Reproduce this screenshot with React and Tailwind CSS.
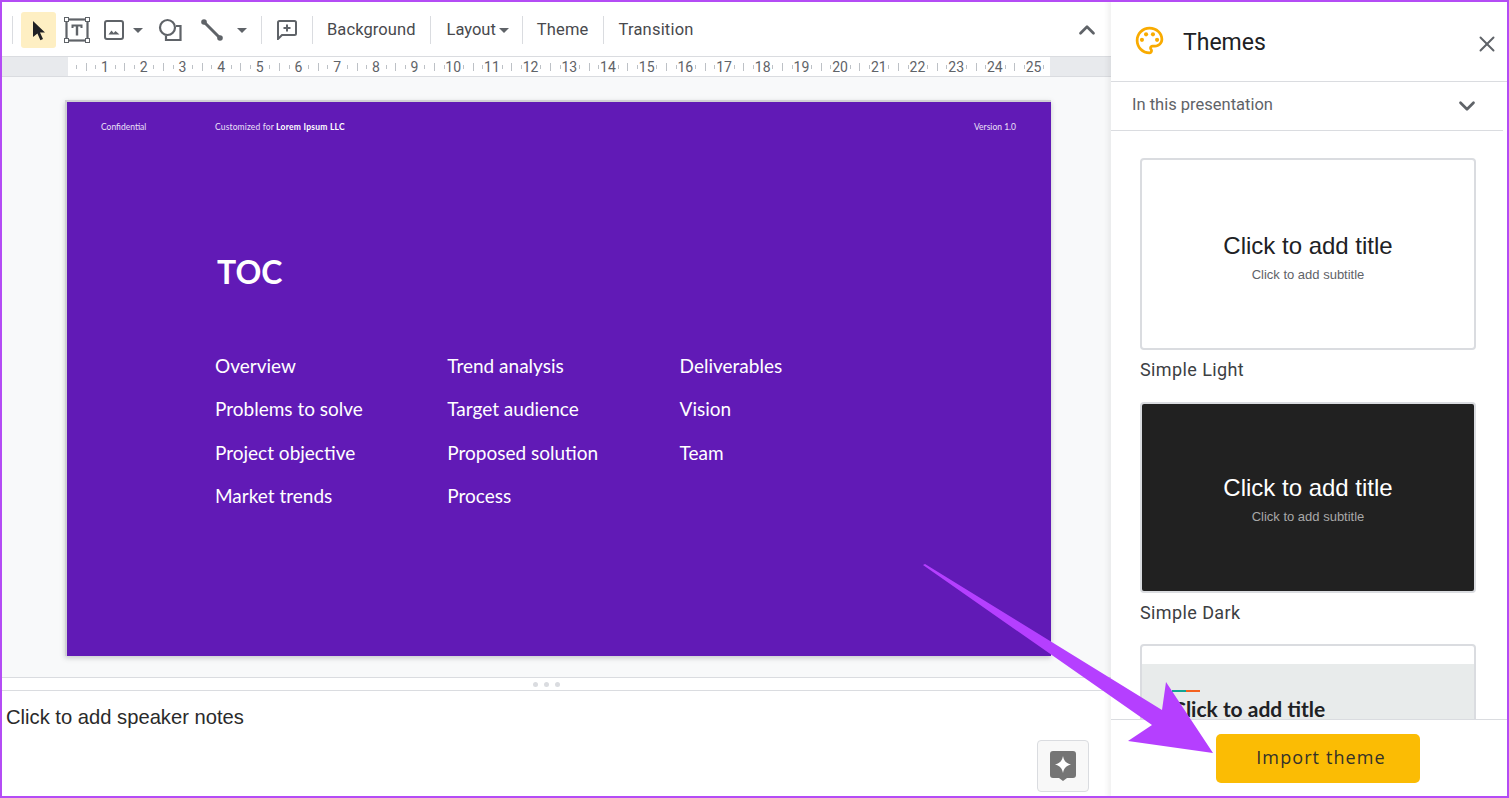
import { ChevronDown, ChevronUp, X } from "lucide-react";

const TOC_COLUMNS = [
  ["Overview", "Problems to solve", "Project objective", "Market trends"],
  ["Trend analysis", "Target audience", "Proposed solution", "Process"],
  ["Deliverables", "Vision", "Team"],
];

const RULER_NUMBERS = Array.from({ length: 25 }, (_, i) => i + 1);

function Caret({ className = "" }) {
  return (
    <svg width="10" height="5" viewBox="0 0 10 5" className={className}>
      <path d="M0 0h10L5 5z" fill="#5f6368" />
    </svg>
  );
}

function Divider({ className = "" }) {
  return <div className={`h-7 w-px bg-[#dadce0] shrink-0 ${className}`} />;
}

function Toolbar() {
  return (
    <div className="h-[57px] shrink-0 flex items-center pt-[4px] border-b border-[#dadce0] bg-white text-[16.5px] text-[#48494d] font-['Roboto',sans-serif]">
      <Divider className="ml-3" />
      {/* Select */}
      <div className="ml-2 w-[35px] h-9 rounded-[3px] bg-[#feefc3] flex items-center justify-center shrink-0">
        <svg width="16" height="21" viewBox="0 0 16 21">
          <path d="M2 1l12 11.500H9l3 6.500-2.600 1.200-3-6.600L2 17z" fill="#202124" />
        </svg>
      </div>
      {/* Text box */}
      <svg width="26" height="26" viewBox="0 0 26 26" className="ml-2 shrink-0">
        <rect x="2.500" y="2.500" width="21" height="21" fill="none" stroke="#5f6368" strokeWidth="2.200" />
        <path d="M7.500 7.500h11v3.500h-2V9.500h-2.300V18.500h-2.400V9.500H9.500V11h-2z" fill="#5f6368" />
        {[[2.500, 2.500], [23.500, 2.500], [2.500, 23.500], [23.500, 23.500]].map(([cx, cy]) => (
          <rect key={`${cx}-${cy}`} x={cx - 2} y={cy - 2} width="4" height="4" fill="#fff" stroke="#5f6368" strokeWidth="1" />
        ))}
      </svg>
      {/* Image */}
      <svg width="20" height="20" viewBox="0 0 20 20" className="ml-[14px] shrink-0">
        <rect x="1" y="1" width="18" height="18" rx="2" fill="none" stroke="#5f6368" strokeWidth="2" />
        <path d="M4.500 14.500l3-4 2.200 2.600 1.800-2.100 4 3.500z" fill="#5f6368" />
      </svg>
      <Caret className="ml-[9px] shrink-0" />
      {/* Shape */}
      <svg width="24" height="24" viewBox="0 0 24 24" className="ml-[15px] shrink-0">
        <circle cx="9.500" cy="9.500" r="7.500" fill="none" stroke="#5f6368" strokeWidth="2.200" />
        <path d="M18 8h4.500v14H8v-4.500" fill="none" stroke="#5f6368" strokeWidth="2.200" />
      </svg>
      {/* Line */}
      <svg width="22" height="22" viewBox="0 0 22 22" className="ml-[19px] shrink-0">
        <path d="M3 3l16 16" stroke="#5f6368" strokeWidth="3" />
        <circle cx="3" cy="3" r="2.800" fill="#5f6368" />
        <circle cx="19" cy="19" r="2.800" fill="#5f6368" />
      </svg>
      <Caret className="ml-[14px] shrink-0" />
      <Divider className="ml-[14px]" />
      {/* Comment */}
      <svg width="20" height="20" viewBox="0 0 20 20" className="ml-[15px] shrink-0">
        <path d="M1 2.500A1.500 1.500 0 0 1 2.500 1h15A1.500 1.500 0 0 1 19 2.500v11a1.500 1.500 0 0 1-1.500 1.500H5l-4 4z" fill="none" stroke="#5f6368" strokeWidth="2" />
        <path d="M9 4.500h2V7h2.500v2H11v2.500H9V9H6.500V7H9z" fill="#5f6368" />
      </svg>
      <Divider className="ml-[15px]" />
      <span className="ml-[14px] tracking-[0.08px]">Background</span>
      <Divider className="ml-[14px]" />
      <span className="ml-4">Layout</span>
      <Caret className="ml-[3px] shrink-0" />
      <Divider className="ml-[13px]" />
      <span className="ml-[14px] tracking-[0.15px]">Theme</span>
      <Divider className="ml-[14px]" />
      <span className="ml-[15px] tracking-[0.2px]">Transition</span>
      <ChevronUp size={26} strokeWidth={2.500} className="ml-auto mr-[11px] text-[#5f6368]" />
    </div>
  );
}

function Ruler() {
  return (
    <div className="h-5 shrink-0 flex pl-[68px] pr-[61px] bg-[#e8eaed] border-b border-[#dadce0]">
      <div className="flex-1 bg-white flex items-center pl-[8px] overflow-hidden text-[14px] text-[#5f6368] font-['Roboto',sans-serif]">
        <div className="w-[9.700px] shrink-0"><div className="h-1 w-px bg-[#bdc1c6]" /></div>
        {RULER_NUMBERS.map((n) => (
          <div key={n} className="w-[38.700px] shrink-0 flex items-center">
            <div className="w-[9.675px]"><div className="h-2 w-px bg-[#bdc1c6]" /></div>
            <div className="w-[9.675px]"><div className="h-1 w-px bg-[#bdc1c6]" /></div>
            <div className="w-[9.675px] flex">
              <span className="w-0 flex justify-center leading-none">{n}</span>
            </div>
            <div className="w-[9.675px]"><div className="h-1 w-px bg-[#bdc1c6]" /></div>
          </div>
        ))}
      </div>
    </div>
  );
}

function Slide() {
  return (
    <div className="ml-[63px] w-[986px] h-[556px] bg-[#611ab6] border-2 border-[#d0d0d4] border-r-0 border-b-0 shadow-[0_2px_5px_rgba(60,64,67,0.25)] text-white font-['Lato',sans-serif] flex flex-col">
      <div className="flex items-center text-[8.500px] pt-[20px] pl-[34px] pr-[35px] leading-[10px]">
        <span className="w-[114px] text-[#ece0f8]">Confidential</span>
        <span className="text-[#ece0f8] tracking-[0.15px]">Customized for <b className="text-white tracking-[0.25px]">Lorem Ipsum LLC</b></span>
        <span className="ml-auto text-[#ece0f8]">Version 1.0</span>
      </div>
      <h1 className="ml-[150px] mt-[120px] text-[32px] font-bold leading-10">TOC</h1>
      <div className="ml-[148px] mt-[61px] flex text-[19px] leading-[26px]">
        {TOC_COLUMNS.map((col) => (
          <div key={col[0]} className="w-[232.300px] flex flex-col gap-[17.400px]">
            {col.map((item) => (
              <span key={item}>{item}</span>
            ))}
          </div>
        ))}
      </div>
    </div>
  );
}

function MainColumn() {
  return (
    <div className="w-[1111px] shrink-0 flex flex-col">
      <Toolbar />
      <Ruler />
      <div className="h-[601px] shrink-0 bg-[#f8f9fa] pt-[23px] pl-[2px] border-b border-[#dadce0]">
        <Slide />
      </div>
      <div className="h-[13px] shrink-0 flex items-center gap-[6px] pl-[533px] border-b border-[#dadce0]">
        {[0, 1, 2].map((i) => (
          <div key={i} className="size-[5px] rounded-full bg-[#dadce0]" />
        ))}
      </div>
      <div className="flex-1 flex flex-col bg-white">
        <p className="pl-[6px] pt-[13px] text-[20.200px] leading-[26px] text-[#2a2a2a] font-['Liberation_Sans',sans-serif]">
          Click to add speaker notes
        </p>
        <div className="mt-auto mb-[6px] ml-auto mr-[22px] w-[52px] h-[52px] rounded border border-[#dadce0] bg-[#f8f8f8] flex items-center justify-center">
          <svg width="26" height="30" viewBox="0 0 26 30">
            <path d="M3 0h20a3 3 0 0 1 3 3v21a3 3 0 0 1-3 3h-6l-4 3-4-3H3a3 3 0 0 1-3-3V3a3 3 0 0 1 3-3z" fill="#757575" />
            <path d="M13 5c1 5 3 7 8 8.500-5 1.500-7 3.500-8 8.500-1-5-3-7-8-8.500 5-1.500 7-3.500 8-8.500z" fill="#fff" />
          </svg>
        </div>
      </div>
    </div>
  );
}

function ThemeCard({ dark = false, label }) {
  return (
    <div className="shrink-0">
      <div
        className={`w-[336px] rounded-[4px] border-2 border-[#dadce0] flex flex-col items-center font-['Liberation_Sans',sans-serif] ${
          dark ? "h-[191px] pt-[68px] bg-[#212121] text-white" : "h-[192px] pt-[70px] bg-white text-[#202124]"
        }`}
      >
        <div className="text-[24px] leading-8">Click to add title</div>
        <div className={`text-[13px] mt-[5px] leading-4 ${dark ? "text-[#a8a8a8]" : "text-[#5f6368]"}`}>
          Click to add subtitle
        </div>
      </div>
      <div className="mt-2 text-[18px] tracking-[0.4px] leading-6 text-[#3c4043] font-['Roboto',sans-serif]">{label}</div>
    </div>
  );
}

function ThemesPanel() {
  return (
    <div className="flex-1 min-w-0 flex flex-col bg-white shadow-[-3px_0_5px_rgba(60,64,67,0.08)] font-['Roboto',sans-serif]">
      <div className="h-[82px] shrink-0 flex items-center border-b border-[#dadce0]">
        <svg width="33" height="33" viewBox="0 0 24 24" className="ml-[22px]" fill="#f9ab00">
          <path d="M12 22C6.490 22 2 17.510 2 12S6.490 2 12 2s10 4.040 10 9c0 3.310-2.690 6-6 6h-1.770c-.280 0-.500.220-.500.500 0 .120.050.230.130.330.410.470.640 1.060.640 1.670 0 1.380-1.120 2.500-2.500 2.500zm0-18c-4.410 0-8 3.590-8 8s3.590 8 8 8c.280 0 .500-.220.500-.500 0-.160-.080-.280-.140-.350-.410-.460-.630-1.050-.630-1.650 0-1.380 1.120-2.500 2.500-2.500H16c2.210 0 4-1.790 4-4 0-3.860-3.590-7-8-7z" />
          <circle cx="6.500" cy="11.500" r="1.500" />
          <circle cx="9.500" cy="7.500" r="1.500" />
          <circle cx="14.500" cy="7.500" r="1.500" />
          <circle cx="17.500" cy="11.500" r="1.500" />
        </svg>
        <span className="ml-[17px] mt-[6px] text-[23px] text-[#202124]">Themes</span>
        <X size={26} strokeWidth={1.800} className="ml-auto mr-[9px] mt-[6px] text-[#5f6368]" />
      </div>
      <div className="h-[49px] shrink-0 mr-[6px] flex items-center border-b border-[#dadce0] pl-[21px] text-[16.500px] text-[#5f6368]">
        <span className="-mt-[2px]">In this presentation</span>
        <ChevronDown size={26} strokeWidth={2.500} className="ml-auto mr-[23px] text-[#5f6368]" />
      </div>
      <div className="flex-1 min-h-0 overflow-hidden pl-[29px] pt-[27px] flex flex-col gap-[20px]">
        <ThemeCard label="Simple Light" />
        <ThemeCard dark label="Simple Dark" />
        <div className="w-[336px] h-[120px] shrink-0 -mt-[1px] rounded-t-[4px] border-2 border-[#dadce0] bg-white pt-[18px]">
          <div className="h-full bg-[#e8ebeb] pl-[30px] pt-[26px]">
            <div className="flex h-[2px] w-[28px]">
              <div className="w-[14px] bg-[#12a594]" />
              <div className="w-[14px] bg-[#f4621f]" />
            </div>
            <div className="mt-[3px] text-[21px] leading-7 font-bold text-[#202124] font-['Lato',sans-serif]">
              Click to add title
            </div>
          </div>
        </div>
      </div>
      <div className="h-[79px] shrink-0 border-t border-[#dadce0] bg-white pt-[14px] pl-[105px]">
        <button className="w-[204px] h-[49px] pb-[2px] pl-[6px] rounded-[5px] bg-[#fbbc04] text-[18px] tracking-[1.100px] text-[#33312a] font-['Open_Sans',sans-serif]">
          Import theme
        </button>
      </div>
    </div>
  );
}

export default function App() {
  return (
    <div className="relative w-[1509px] h-[798px] overflow-hidden flex bg-white">
      <MainColumn />
      <ThemesPanel />

      {/* Annotation arrow over the screenshot */}
      <svg width="1509" height="798" viewBox="0 0 1509 798" className="absolute inset-0 pointer-events-none">
        <polygon
          points="923,565 925,564 1162,710 1166,682 1213,753 1128,741 1152,725"
          fill="#b53fff"
        />
      </svg>

      {/* Purple frame round the screenshot */}
      <div className="absolute inset-0 border-2 border-[#b44cf5] pointer-events-none" />
    </div>
  );
}
